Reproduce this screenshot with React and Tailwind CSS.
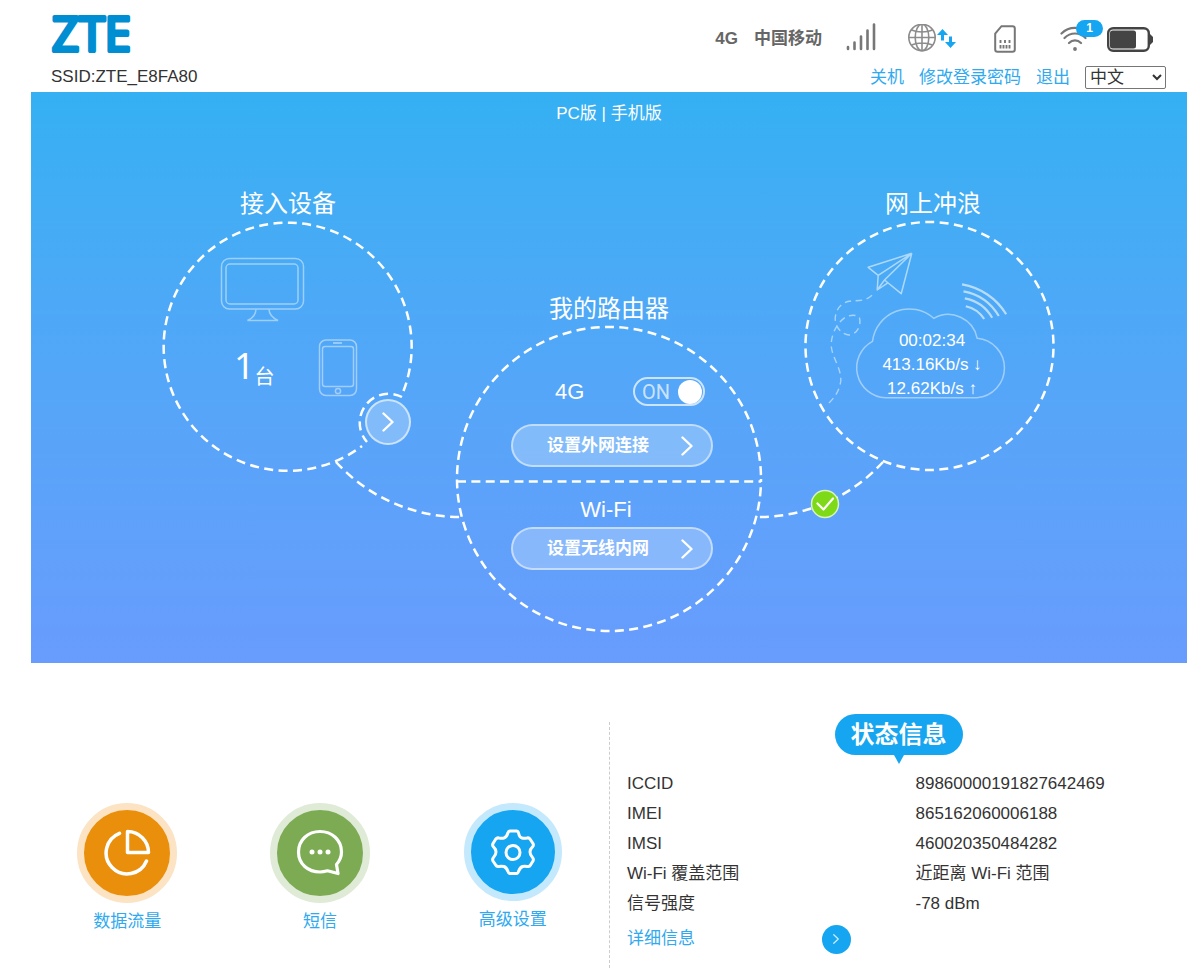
import { useState } from "react";

const statusRows = [
  { label: "ICCID", value: "89860000191827642469" },
  { label: "IMEI", value: "865162060006188" },
  { label: "IMSI", value: "460020350484282" },
  { label: "Wi-Fi 覆盖范围", value: "近距离 Wi-Fi 范围" },
  { label: "信号强度", value: "-78 dBm" },
];

const Logo = () => (
  <svg className="overflow-visible" width="96" height="44" viewBox="0 0 96 44" role="img" aria-label="ZTE">
    <text
      x="1"
      y="39"
      fontFamily="'Open Sans', 'Noto Sans', sans-serif"
      fontSize="47"
      fill="#008ed3"
      stroke="#008ed3"
      strokeWidth="4"
      strokeLinejoin="round"
    >
      ZTE
    </text>
  </svg>
);

const SignalIcon = () => (
  <svg width="30" height="32" viewBox="0 0 30 32" stroke="#777" strokeWidth="2.6" strokeLinecap="round">
    <path d="M2 24v2M8.500 19.500v6.500M15 13.500v12.500M21.500 7.500v18.500M28 1.500v24.500" />
  </svg>
);

const GlobeIcon = () => (
  <svg width="48" height="30" viewBox="0 0 48 30" fill="none">
    <g stroke="#8c8c8c" strokeWidth="1.6">
      <circle cx="14" cy="13.500" r="13.200" />
      <ellipse cx="14" cy="13.500" rx="6.800" ry="13.200" />
      <path d="M14 .3v26.400M.8 13.500h26.400M3.500 6c6 2.600 15 2.600 21 0M3.500 21c6-2.600 15-2.600 21 0" />
    </g>
    <g fill="#16a5f0">
      <path d="M34.500 5l5.500 6h-4v5.500h-3v-5.500h-4z" />
      <path d="M42.500 24l5.500-6h-4v-5.500h-3v5.500h-4z" />
    </g>
  </svg>
);

const SimIcon = () => (
  <svg width="22" height="28" viewBox="0 0 22 28" fill="none">
    <path d="M7.500 1.200H18.500a2.300 2.300 0 0 1 2.300 2.300V24.500a2.300 2.300 0 0 1-2.300 2.300H3.500a2.300 2.300 0 0 1-2.300-2.300V8.500z" stroke="#777" strokeWidth="2" />
    <path d="M6.500 15v3M11 15v3M15.500 15v3M6.500 20v3.500M9.500 20v3.500M12.500 20v3.500M15.500 20v3.500" stroke="#777" strokeWidth="1.900" />
  </svg>
);

const WifiIcon = () => (
  <svg width="30" height="26" viewBox="0 0 30 26" fill="none" stroke="#777" strokeWidth="2.200" strokeLinecap="round">
    <path d="M1.500 7.500C9 0 21 0 28 7.500M4.500 12c6-6 15-6 21 0M9 17c3.500-3.500 8.500-3.500 12 0" />
    <circle cx="15" cy="23" r="1.900" fill="#777" stroke="none" />
  </svg>
);

const BatteryIcon = () => (
  <svg width="46" height="25" viewBox="0 0 46 25">
    <path d="M41 7h2l3 3v5l-3 3h-2z" fill="#444" />
    <rect x="1.200" y="1.200" width="40.600" height="22.600" rx="5" fill="#fff" stroke="#444" strokeWidth="2.400" />
    <rect x="3" y="3.500" width="26" height="18" rx="2.500" fill="#444" />
  </svg>
);

const Chevron = ({ className }) => (
  <svg className={className} viewBox="0 0 12 20" fill="none" stroke="currentColor" strokeWidth="2.400" strokeLinecap="round" strokeLinejoin="round">
    <path d="M1.500 1.500L10.500 10L1.500 18.500" />
  </svg>
);

const Header = () => {
  const [lang, setLang] = useState("zh");

  return (
    <header className="flex justify-between h-[92px] pl-5 pr-[21px]">
      <div className="flex flex-col pt-3">
        <Logo />
        <p className="mt-[9px] leading-6">SSID:ZTE_E8FA80</p>
      </div>

      <div className="flex flex-col items-end pt-5">
        <div className="flex items-center h-[38px] mr-[13px] font-bold text-[#666]">
          <span>4G</span>
          <span className="ml-4">中国移动</span>
          <span className="ml-6"><SignalIcon /></span>
          <span className="ml-8"><GlobeIcon /></span>
          <span className="ml-[38px]"><SimIcon /></span>
          <span className="relative ml-11 w-[43px]">
            <WifiIcon />
            <span className="absolute right-0 -top-[6px] w-[27px] h-[17px] rounded-full bg-[#16a5f0] text-white text-xs leading-[17px] text-center">1</span>
          </span>
          <span className="ml-1"><BatteryIcon /></span>
        </div>
        <nav className="flex items-center gap-[15px] mt-[7px] text-[#2fa9f0]">
          <a href="#">关机</a>
          <a href="#">修改登录密码</a>
          <a href="#">退出</a>
          <select
            aria-label="语言"
            value={lang}
            onChange={(e) => setLang(e.target.value)}
            className="w-[81px] h-[23px] border border-[#767676] rounded-xs bg-white text-[#333] leading-5"
          >
            <option value="zh">中文</option>
            <option value="en">English</option>
          </select>
        </nav>
      </div>
    </header>
  );
};

const DevicesCircle = () => (
  <section className="w-[250px] text-white">
    <h2 className="h-9 text-2xl leading-[38px] text-center">接入设备</h2>
    <div className="relative h-[250px] pt-[124px] pl-[71px]">
      <svg className="absolute inset-0 overflow-visible" width="250" height="250" viewBox="0 0 250 250" fill="none" stroke="#fff">
        <g strokeWidth="2.500" strokeDasharray="9 5.420">
          <path d="M240.500 170A124 124 0 1 0 199 225" />
          <path d="M239 176A29 29 0 0 0 204 221" />
        </g>
        <g strokeWidth="1.500" opacity=".45">
          <rect x="58.500" y="37.500" width="82" height="50.500" rx="8" />
          <rect x="63" y="43" width="72" height="40" rx="4" />
          <path d="M93 88c0 5-3 9-8.500 11.500h30.500c-5-2.500-9-6.500-9-11.500" />
          <rect x="156.500" y="119" width="37" height="55.500" rx="6.500" />
          <rect x="159.500" y="125.500" width="31" height="40" rx="2.500" />
          <circle cx="175" cy="170" r="2.600" />
          <path d="M170 122h9" strokeWidth="1.800" />
        </g>
      </svg>
      <p className="relative flex items-end">
        <span className="font-['Noto_Sans'] text-4xl leading-[42px]">1</span>
        <span className="text-xl leading-5">台</span>
      </p>
      <a
        href="#"
        aria-label="接入设备详情"
        className="absolute left-[202px] top-[178px] flex items-center justify-center size-[46px] rounded-full border-2 border-white/60 bg-white/25"
      >
        <Chevron className="w-3 h-5" />
      </a>
    </div>
  </section>
);

const RouterCircle = () => {
  const [online, setOnline] = useState(true);

  return (
    <section className="w-[306px] mt-[105px] text-white">
      <h2 className="h-9 text-2xl leading-[38px] text-center">我的路由器</h2>
      <div className="relative h-[306px] pt-[51px] pl-[6px]">
        <svg className="absolute inset-0 overflow-visible" width="306" height="306" viewBox="0 0 306 306" fill="none" stroke="#fff" strokeWidth="2.500">
          <circle cx="153" cy="153" r="152" strokeDasharray="9 5.360" strokeDashoffset="6" />
          <path d="M1 155.500H305" strokeDasharray="9 5.360" />
        </svg>
        <div className="relative flex flex-col items-center">
          <div className="flex items-center justify-between w-[202px] pl-11 pr-2 text-[22px] leading-6">
            <span id="wan-label">4G</span>
            <label className="flex items-center justify-between w-[72px] h-[29px] pl-[7px] pr-[1px] rounded-full border-2 border-white/70 cursor-pointer">
              <input
                type="checkbox"
                aria-labelledby="wan-label"
                checked={online}
                onChange={(e) => setOnline(e.target.checked)}
                className="peer sr-only"
              />
              <span className="font-[Roboto] text-xl text-white/70">{online ? "ON" : "OFF"}</span>
              <span className="size-6 rounded-full bg-white"></span>
            </label>
          </div>
          <button className="flex items-center justify-between w-[202px] h-[43px] mt-[18px] pl-[34px] pr-[18px] rounded-full border-2 border-white/50 bg-white/25 font-bold">
            设置外网连接
            <Chevron className="w-3 h-5" />
          </button>
          <p className="mt-[31px] pr-3 text-[22px] leading-6">Wi-Fi</p>
          <button className="flex items-center justify-between w-[202px] h-[43px] mt-[5px] pl-[34px] pr-[18px] rounded-full border-2 border-white/50 bg-white/25 font-bold">
            设置无线内网
            <Chevron className="w-3 h-5" />
          </button>
        </div>
      </div>
    </section>
  );
};

const InternetCircle = () => (
  <section className="w-[250px] text-white">
    <h2 className="h-9 pl-[6px] text-2xl leading-[38px] text-center">网上冲浪</h2>
    <div className="relative h-[250px] pt-[108px]">
      <svg className="absolute inset-0 overflow-visible" width="250" height="250" viewBox="0 0 250 250" fill="none" stroke="#fff">
        <circle cx="124.500" cy="125" r="124" strokeWidth="2.500" strokeDasharray="9 5.428" strokeDashoffset="11.700" />
        <path
          d="M80.500 176.700A30 30 0 0 1 67.500 120.300A37 37 0 0 1 128.800 97.300A29.500 29.500 0 0 1 172.200 117.300A29.800 29.800 0 0 1 172 176.700Z"
          strokeWidth="1.500"
          opacity=".45"
        />
        <g strokeWidth="2.200" opacity=".6">
          <path d="M157 63.300A64 64 0 0 1 201.200 93.300" />
          <path d="M158.500 70.300A52 52 0 0 1 193.800 95" />
          <path d="M159.800 77.300A40 40 0 0 1 187.200 96.700" />
          <path d="M160.800 85.300A30 30 0 0 1 179.200 98" />
        </g>
        <g strokeWidth="1.500" strokeLinejoin="round" opacity=".55">
          <path d="M106.800 32.300L63.200 46.300L73.200 54.300L72.200 69L83.200 61.700M106.800 32.300L96.200 72.700L79.500 59M106.800 32.300L73.200 54.300M106.800 32.300L79.500 59L72.200 69" />
        </g>
        <path
          d="M67 74.300C60 81 51 79 44 80.300C34 82 28 93 31 103C34 111 41 115 46 113.800C54 111 56 103 54.500 97C52 93 44 94 40 96.500C30 103 25 118 26.500 127C28 138 36 146 35.800 160C34 171 29 178 20.500 185"
          strokeWidth="1.400"
          strokeDasharray="6.500 4.500"
          opacity=".5"
        />
      </svg>
      <div className="relative pl-1 text-center leading-6">
        <p>00:02:34</p>
        <p>413.16Kb/s ↓</p>
        <p>12.62Kb/s ↑</p>
      </div>
    </div>
  </section>
);

const Connectors = () => (
  <svg className="absolute inset-0 pointer-events-none" width="892" height="447" viewBox="0 0 892 447" fill="none" stroke="#fff" strokeWidth="2.500">
    <path d="M173 277A169 169 0 0 0 297 332" strokeDasharray="9 5.400" />
    <path d="M720 277A169 169 0 0 1 596 332" strokeDasharray="9 5.400" />
    <circle cx="662" cy="319" r="13.500" fill="#7ed916" strokeWidth="1.500" stroke="#d7f3c0" />
    <path d="M654.500 318.500l6 6l9.500-11" strokeWidth="2.200" strokeLinecap="round" strokeLinejoin="round" />
  </svg>
);

const Hero = () => (
  <main className="pt-[10px] pb-[31px] bg-linear-to-b from-[#34b0f3] to-[#689cfd]">
    <p className="text-center leading-6 text-white">
      <a href="#">PC版</a> | <a href="#">手机版</a>
    </p>
    <div className="relative flex items-start justify-between w-[892px] mx-auto mt-[59px]">
      <Connectors />
      <DevicesCircle />
      <RouterCircle />
      <InternetCircle />
    </div>
  </main>
);

const Shortcuts = () => (
  <nav className="grid grid-cols-3 items-start justify-items-center pt-[89px] text-[#2fa9f0]">
    <a href="#" className="flex flex-col items-center">
      <span className="flex items-center justify-center size-[100px] rounded-full border-[7px] border-[#fbe3c3] bg-[#ea8f0b]">
        <svg width="48" height="48" viewBox="0 0 48 48" fill="none" stroke="#fff" strokeWidth="3.500" strokeLinecap="round" strokeLinejoin="round">
          <path d="M16.500 4.300A21 21 0 1 0 43.500 32" />
          <path d="M24.500 2.500V23.500H45.500A21 21 0 0 0 24.500 2.500Z" />
        </svg>
      </span>
      <span className="mt-[7px] leading-6">数据流量</span>
    </a>
    <a href="#" className="flex flex-col items-center">
      <span className="flex items-center justify-center size-[100px] rounded-full border-[7px] border-[#dfebd6] bg-[#7cab54]">
        <svg width="48" height="48" viewBox="0 0 48 48" fill="none" stroke="#fff" strokeWidth="3.200" strokeLinecap="round" strokeLinejoin="round">
          <path d="M40.500 35.500C43.500 32 45.500 27.500 45.500 23C45.500 11 36 2.500 24 2.500S2.500 11 2.500 23S12 43 24 43C26.500 43 29 42.500 31.500 41.800L42 44.500Z" />
          <g fill="#fff" stroke="none">
            <circle cx="16" cy="23" r="2.500" />
            <circle cx="24" cy="23" r="2.500" />
            <circle cx="32" cy="23" r="2.500" />
          </g>
        </svg>
      </span>
      <span className="mt-[7px] leading-6">短信</span>
    </a>
    <a href="#" className="flex flex-col items-center">
      <span className="flex items-center justify-center size-[98px] rounded-full border-[7px] border-[#c5e9fc] bg-[#16a5f0]">
        <svg width="48" height="48" viewBox="0 0 48 48" fill="none" stroke="#fff" strokeWidth="3" strokeLinejoin="round">
          <circle cx="24" cy="24.500" r="7" />
          <path d="M21 3H27.500Q29 3 29.500 4.800Q30.500 9.500 33 10Q35 10.500 38 10Q40 9.500 41 11L44 15.500Q45 17.500 43.500 18.800Q41 21 41 24Q41 27 43.500 29.500Q45 31 44 33L41.500 37Q40.500 39 38.500 38.500Q35.500 38 33.500 38.500Q31 39.500 29.500 43.500Q29 45.500 27.500 45.500H21Q19.500 45.500 19 43.500Q17.500 39.500 15 38.500Q12.500 38 9.800 38.500Q7.700 39 6.700 37L4 33Q3 31 4.500 29.500Q7 27 7 24Q7 21 4.500 18.800Q3 17.500 4 15.500L6.800 11Q8 9.500 10 10Q13 10.500 15 10Q17.500 9.500 19 4.800Q19.500 3 21 3Z" />
        </svg>
      </span>
      <span className="mt-[7px] leading-6">高级设置</span>
    </a>
  </nav>
);

const StatusInfo = () => (
  <section className="flex">
    <div className="mt-2 border-l border-dashed border-[#ccc]"></div>
    <div className="flex-1">
      <div className="flex flex-col items-center">
        <h2 className="h-[41px] px-4 rounded-full bg-[#16a5f0] text-white text-2xl leading-[42px] font-bold">状态信息</h2>
        <svg width="10" height="9" viewBox="0 0 10 9" fill="#16a5f0">
          <path d="M0 0H10L5 9Z" />
        </svg>
      </div>
      <table className="w-full mt-[5px] table-fixed">
        <tbody>
          {statusRows.map((row) => (
            <tr key={row.label} className="h-[30px]">
              <th scope="row" className="pl-[17px] font-normal text-left leading-6">{row.label}</th>
              <td className="pl-[17px] leading-6">{row.value}</td>
            </tr>
          ))}
        </tbody>
      </table>
      <div className="flex items-center justify-between w-1/2 h-10 pl-[17px] pr-12">
        <a href="#" className="text-[#2fa9f0]">详细信息</a>
        <a href="#" aria-label="查看详细信息" className="flex items-center justify-center size-[29px] rounded-full bg-[#16a5f0] text-white/80">
          <Chevron className="w-[6px] h-[10px]" />
        </a>
      </div>
    </div>
  </section>
);

const App = () => {
  return (
    <div className="flex flex-col min-h-screen pl-[31px] pr-[13px] bg-white text-[17px] text-[#333] font-['Liberation_Sans','Noto_Sans_CJK_SC',sans-serif]">
      <Header />
      <Hero />
      <div className="grid grid-cols-2 grow mt-[51px]">
        <Shortcuts />
        <StatusInfo />
      </div>
    </div>
  );
};

export default App;
